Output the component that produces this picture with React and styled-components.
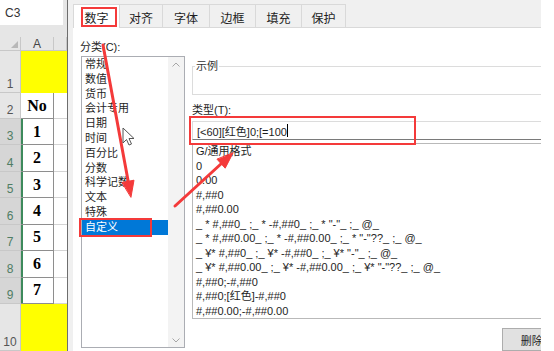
import styled, { createGlobalStyle } from "styled-components";

const COLORS = {
  RED: "#f43a3a",
  YELLOW: "#ffff00",
  HEAD: "#e6e6e6",
  HEAD_SEL: "#d6d6d6",
  HEAD_LINE: "#c8c8c8",
  GREEN: "#3d8a5c",
  DIALOG: "#f0f0f0",
  LINE: "#d9d9d9",
  TEXT: "#1e1e1e",
  BLUE: "#0078d7",
};

const GlobalStyle = createGlobalStyle`
  body {
    margin: 0;
    background: #fff;
    font-family: "Liberation Sans", "Noto Sans CJK SC", sans-serif;
    color: ${COLORS.TEXT};
  }
`;

const Screen = styled.div`
  position: relative;
  width: 554px;
  height: 351px;
  overflow: hidden;
  display: flex;
  background: #fff;
`;

/* spreadsheet strip on the left */

const Sheet = styled.div`
  width: 67px;
  flex: none;
  display: flex;
  flex-direction: column;
  background: ${COLORS.HEAD};
`;

const NameBox = styled.div`
  width: 63px;
  height: 25px;
  box-sizing: border-box;
  padding-left: 5px;
  display: flex;
  align-items: center;
  background: #fff;
  font-size: 12px;
  color: #333;
`;

const Grid = styled.div`
  flex: 1;
  margin-top: 12px;
  display: grid;
  grid-template-columns: 21px 33px 13px;
  grid-template-rows: 14px 42px 26px repeat(7, 26.43px) 1fr;
`;

const Corner = styled.div`
  display: flex;
  align-items: flex-end;
  justify-content: flex-end;
  padding: 0 2px 2px 0;
  border-right: 1px solid ${COLORS.HEAD_LINE};
  border-bottom: 1px solid ${COLORS.HEAD_LINE};

  &::after {
    content: "";
    border-left: 7px solid transparent;
    border-bottom: 7px solid #b8b8b8;
  }
`;

const ColHead = styled.div`
  display: flex;
  align-items: center;
  justify-content: center;
  font-size: 12px;
  color: #444;
  border-right: 1px solid ${COLORS.HEAD_LINE};
  border-bottom: 1px solid ${COLORS.HEAD_LINE};
`;

const RowHead = styled.div`
  display: flex;
  align-items: flex-end;
  justify-content: center;
  padding-bottom: 1px;
  font-size: 12px;
  background: ${(p) => (p.$selected ? COLORS.HEAD_SEL : COLORS.HEAD)};
  color: ${(p) => (p.$selected ? "#4f7d64" : "#555")};
  border-right: 1px solid ${COLORS.HEAD_LINE};
  border-bottom: 1px solid ${COLORS.HEAD_LINE};
`;

const FillCell = styled.div`
  grid-column: span 2;
  background: ${COLORS.YELLOW};
`;

const NumCell = styled.div`
  display: flex;
  align-items: center;
  justify-content: center;
  background: #fff;
  border-right: 1px solid #8e8e8e;
  border-bottom: 1px solid #8e8e8e;
  box-shadow: ${(p) => (p.$selected ? `inset 2px 0 0 ${COLORS.GREEN}` : "none")};
  font-family: "Liberation Serif", serif;
  font-weight: bold;
  font-size: 16px;
  color: #000;
`;

const BlankCell = styled.div`
  background: #fff;
  border-bottom: 1px solid #d4d4d4;
`;

/* format cells dialog */

const Dialog = styled.div`
  width: 474px;
  flex: none;
  box-sizing: border-box;
  border-left: 1px solid #6e6e6e;
  background: ${COLORS.DIALOG};
  padding-left: 5px;
  overflow: hidden;
  display: flex;
  flex-direction: column;
  font-size: 11px;
`;

const TabBar = styled.div`
  height: 27px;
  flex: none;
  display: flex;
  align-items: flex-end;
  border-bottom: 1px solid ${COLORS.LINE};
`;

const Tab = styled.div`
  width: ${(p) => p.$w}px;
  height: ${(p) => (p.$active ? 24 : 23)}px;
  margin-bottom: ${(p) => (p.$active ? -1 : 0)}px;
  box-sizing: border-box;
  padding-top: 2px;
  display: flex;
  align-items: center;
  justify-content: center;
  font-size: 12px;
  background: ${(p) => (p.$active ? "#fff" : COLORS.DIALOG)};
  border: 1px solid ${COLORS.LINE};
  border-left-width: ${(p) => (p.$first ? 1 : 0)}px;
  border-bottom: none;
`;

const Page = styled.div`
  flex: 1;
  min-height: 0;
  display: flex;
  background: #fff;
`;

const CategoryColumn = styled.div`
  width: 112px;
  flex: none;
  box-sizing: border-box;
  padding: 12px 0 3px 7px;
  display: flex;
  flex-direction: column;
`;

const Label = styled.div`
  line-height: 14px;
  font-size: 11px;
`;

const ListBox = styled.div`
  flex: 1;
  margin: 2px 0 0 1px;
  display: flex;
  border: 1px solid #abadb3;
  background: #fff;
`;

const ListItems = styled.div`
  flex: 1;
`;

const ListItem = styled.div`
  height: 14.8px;
  line-height: 14.8px;
  padding-left: 3px;
  white-space: nowrap;
  background: ${(p) => (p.$selected ? COLORS.BLUE : "transparent")};
  color: ${(p) => (p.$selected ? "#fff" : COLORS.TEXT)};
`;

const ScrollTrack = styled.div`
  width: 16px;
  display: flex;
  flex-direction: column;
  justify-content: space-between;
  align-items: center;
  padding: 5px 0 4px;
  background: #f3f3f3;
  color: #a6a6a6;
`;

const TypeColumn = styled.div`
  width: 385px;
  flex: none;
  margin-left: 7px;
  padding-top: 38px;
  display: flex;
  flex-direction: column;
`;

const GroupBox = styled.div`
  height: 36px;
  box-sizing: border-box;
  border: 1px solid #dcdcdc;
  padding-left: 2px;
`;

const GroupTitle = styled.div`
  width: fit-content;
  margin-top: -7px;
  padding: 0 1px;
  background: #fff;
  line-height: 12px;
  color: #333;
`;

const TypeLabel = styled(Label)`
  margin-top: 8px;
`;

const Input = styled.div`
  height: 23px;
  margin-top: 4px;
  box-sizing: border-box;
  padding-left: 4px;
  display: flex;
  align-items: center;
  border: 1px solid #dcdcdc;
  border-bottom-color: #7a7a7a;
  white-space: nowrap;
`;

const Caret = styled.span`
  display: inline-block;
  width: 0;
  height: 13px;
  border-left: 1px solid #000;
`;

const FormatList = styled.div`
  margin-top: 3px;
  border: 1px solid #b9b9b9;
`;

const FormatItem = styled.div`
  height: 14.5px;
  line-height: 14.5px;
  padding-left: 3px;
  white-space: pre;
`;

const ButtonRow = styled.div`
  margin-top: 9px;
  display: flex;
  justify-content: flex-end;
`;

const Button = styled.div`
  width: 75px;
  height: 23px;
  box-sizing: border-box;
  display: flex;
  align-items: center;
  justify-content: center;
  background: #e1e1e1;
  border: 1px solid #adadad;
`;

const Annotations = styled.svg`
  position: absolute;
  left: 0;
  top: 0;
  pointer-events: none;
`;

const TABS = [
  ["数字", 47],
  ["对齐", 43],
  ["字体", 47],
  ["边框", 46],
  ["填充", 46],
  ["保护", 44],
];

const CATEGORIES = [
  "常规",
  "数值",
  "货币",
  "会计专用",
  "日期",
  "时间",
  "百分比",
  "分数",
  "科学记数",
  "文本",
  "特殊",
  "自定义",
];

const FORMATS = [
  "G/通用格式",
  "0",
  "0.00",
  "#,##0",
  "#,##0.00",
  '_ * #,##0_ ;_ * -#,##0_ ;_ * "-"_ ;_ @_',
  '_ * #,##0.00_ ;_ * -#,##0.00_ ;_ * "-"??_ ;_ @_',
  '_ ¥* #,##0_ ;_ ¥* -#,##0_ ;_ ¥* "-"_ ;_ @_',
  '_ ¥* #,##0.00_ ;_ ¥* -#,##0.00_ ;_ ¥* "-"??_ ;_ @_',
  "#,##0;-#,##0",
  "#,##0;[红色]-#,##0",
  "#,##0.00;-#,##0.00",
];

const Chevron = ({ up }) => (
  <svg width="8" height="5" viewBox="0 0 8 5">
    <path
      d={up ? "M0.5 4.5 L4 1 L7.5 4.5" : "M0.5 0.5 L4 4 L7.5 0.5"}
      fill="none"
      stroke="currentColor"
      strokeWidth="1"
    />
  </svg>
);

const App = () => {
  const numbers = [1, 2, 3, 4, 5, 6, 7];

  return (
    <Screen>
      <GlobalStyle />
      <Sheet>
        <NameBox>C3</NameBox>
        <Grid>
          <Corner />
          <ColHead>A</ColHead>
          <ColHead />

          <RowHead>1</RowHead>
          <FillCell />

          <RowHead>2</RowHead>
          <NumCell>No</NumCell>
          <BlankCell />

          {numbers.map((n) => [
            <RowHead key={`h${n}`} $selected>
              {n + 2}
            </RowHead>,
            <NumCell key={`c${n}`} $selected>
              {n}
            </NumCell>,
            <BlankCell key={`b${n}`} />,
          ])}

          <RowHead>10</RowHead>
          <FillCell />
        </Grid>
      </Sheet>

      <Dialog>
        <TabBar>
          {TABS.map(([name, w], i) => (
            <Tab key={name} $w={w} $active={i === 0} $first={i === 0}>
              {name}
            </Tab>
          ))}
        </TabBar>
        <Page>
          <CategoryColumn>
            <Label>分类(C):</Label>
            <ListBox>
              <ListItems>
                {CATEGORIES.map((c, i) => (
                  <ListItem key={c} $selected={i === CATEGORIES.length - 1}>
                    {c}
                  </ListItem>
                ))}
              </ListItems>
              <ScrollTrack>
                <Chevron up />
                <Chevron />
              </ScrollTrack>
            </ListBox>
          </CategoryColumn>

          <TypeColumn>
            <GroupBox>
              <GroupTitle>示例</GroupTitle>
            </GroupBox>
            <TypeLabel>类型(T):</TypeLabel>
            <Input>
              [&lt;60][红色]0;[=100
              <Caret />
            </Input>
            <FormatList>
              {FORMATS.map((f) => (
                <FormatItem key={f}>{f}</FormatItem>
              ))}
            </FormatList>
            <ButtonRow>
              <Button>删除(D)</Button>
            </ButtonRow>
          </TypeColumn>
        </Page>
      </Dialog>

      <Annotations width="554" height="351" viewBox="0 0 554 351">
        <g fill="none" stroke={COLORS.RED} strokeWidth="2">
          <rect x="82" y="8" width="34" height="18" />
          <rect x="80" y="219" width="71" height="17" />
          <rect x="190" y="117" width="225" height="27" />
        </g>
        <g fill={COLORS.RED} stroke={COLORS.RED} strokeLinecap="round">
          <line x1="103" y1="45" x2="128.5" y2="183" strokeWidth="3" />
          <polygon points="131,197 134,180.2 122.2,182.4" strokeWidth="1" />
          <line x1="175" y1="206" x2="222" y2="163" strokeWidth="3" />
          <polygon points="233,153 225.2,168.2 217.2,159.4" strokeWidth="1" />
        </g>
        <path
          d="M123 128 L123 143 L126.5 139.5 L129 145 L131.5 144 L129 138.5 L134 138.5 Z"
          fill="#fff"
          stroke="#555"
          strokeWidth="1"
          strokeLinejoin="round"
        />
      </Annotations>
    </Screen>
  );
};

export default App;
